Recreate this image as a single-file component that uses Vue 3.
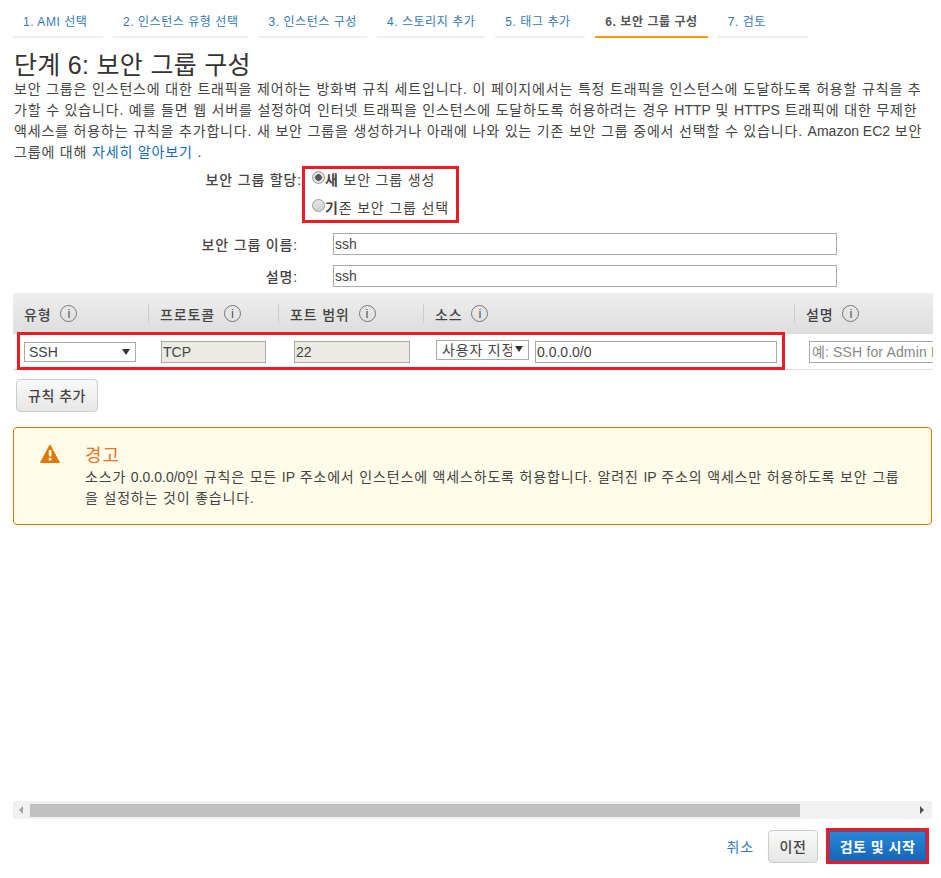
<script setup>
const tabs = [
  { label: '1. AMI 선택' },
  { label: '2. 인스턴스 유형 선택' },
  { label: '3. 인스턴스 구성' },
  { label: '4. 스토리지 추가' },
  { label: '5. 태그 추가' },
  { label: '6. 보안 그룹 구성', active: true },
  { label: '7. 검토' },
]
const columns = [
  { label: '유형', width: 135 },
  { label: '프로토콜', width: 130 },
  { label: '포트 범위', width: 145 },
  { label: '소스', width: 371 },
  { label: '설명', width: 138 },
]
</script>

<template>
  <div class="page">
    <ul class="tabs">
      <li v-for="tab in tabs" :key="tab.label" :class="{ tab: true, active: tab.active }">{{ tab.label }}</li>
    </ul>

    <h1 class="title">단계 6: 보안 그룹 구성</h1>
    <p class="intro">
      보안 그룹은 인스턴스에 대한 트래픽을 제어하는 방화벽 규칙 세트입니다. 이 페이지에서는 특정 트래픽을 인스턴스에 도달하도록 허용할 규칙을 추<br>
      가할 수 있습니다. 예를 들면 웹 서버를 설정하여 인터넷 트래픽을 인스턴스에 도달하도록 허용하려는 경우 <span class="en">HTTP</span> 및 <span class="en">HTTPS</span> 트래픽에 대한 무제한<br>
      액세스를 허용하는 규칙을 추가합니다. 새 보안 그룹을 생성하거나 아래에 나와 있는 기존 보안 그룹 중에서 선택할 수 있습니다. <span class="en">Amazon EC2</span> 보안<br>
      그룹에 대해 <a class="link">자세히 알아보기</a> .
    </p>

    <div class="assign">
      <div class="assign-label">보안 그룹 할당:</div>
      <div class="radios">
        <label class="radio"><input type="radio" name="sg" checked><span><b>새</b> 보안 그룹 생성</span></label>
        <label class="radio"><input type="radio" name="sg"><span><b>기</b>존 보안 그룹 선택</span></label>
        <div class="mark"></div>
      </div>
    </div>

    <div class="field first">
      <div class="field-label">보안 그룹 이름:</div>
      <input class="box field-input" value="ssh">
    </div>
    <div class="field">
      <div class="field-label">설명:</div>
      <input class="box field-input" value="ssh">
    </div>

    <div class="table">
      <div class="thead">
        <div v-for="col in columns" :key="col.label" class="th" :style="{ width: col.width + 'px' }">
          <span class="th-text">{{ col.label }}</span>
          <span class="info">i</span>
        </div>
      </div>
      <div class="tr">
        <div class="select-wrap type"><select class="select"><option>SSH</option></select></div>
        <input class="box ro proto" value="TCP" readonly>
        <input class="box ro port" value="22" readonly>
        <div class="select-wrap source"><select class="select"><option>사용자 지정</option></select></div>
        <input class="box cidr" value="0.0.0.0/0">
        <input class="box desc" placeholder="예: SSH for Admin Desktop">
      </div>
      <div class="mark row-mark"></div>
    </div>

    <button class="btn add">규칙 추가</button>

    <div class="warning">
      <svg class="warn-icon" width="20" height="19" viewBox="0 0 20 19">
        <path d="M10 1 L19.5 18.5 H0.5 Z" fill="#e07700" stroke="#e07700" stroke-width="1" stroke-linejoin="round"/>
        <rect x="8.8" y="6" width="2.6" height="6.5" fill="#fffce9"/>
        <rect x="8.8" y="14" width="2.6" height="2.6" fill="#fffce9"/>
      </svg>
      <div>
        <div class="warn-title">경고</div>
        <div class="warn-text">
          소스가 <span class="en">0.0.0.0/0</span>인 규칙은 모든 <span class="en">IP</span> 주소에서 인스턴스에 액세스하도록 허용합니다. 알려진 <span class="en">IP</span> 주소의 액세스만 허용하도록 보안 그룹<br>
          을 설정하는 것이 좋습니다.
        </div>
      </div>
    </div>

    <div class="spacer"></div>

    <div class="scrollbar">
      <span class="arrow left"></span>
      <div class="thumb"></div>
      <span class="arrow right"></span>
    </div>

    <div class="footer">
      <a class="cancel">취소</a>
      <button class="btn prev">이전</button>
      <div class="primary-wrap">
        <button class="primary">검토 및 시작</button>
      </div>
    </div>
  </div>
</template>

<style scoped>
.page {
  box-sizing: border-box;
  width: 941px;
  height: 878px;
  overflow: hidden;
  padding: 0 9px 0 13px;
  display: flex;
  flex-direction: column;
  font-family: "Liberation Sans", "Noto Sans CJK KR", sans-serif;
  font-size: 14px;
  letter-spacing: 0.83px;
  color: #444;
}
.en {
  letter-spacing: 0;
}
.tabs {
  list-style: none;
  display: flex;
  gap: 10px;
  margin: 0;
  padding: 0;
  height: 38px;
}
.tab {
  box-sizing: border-box;
  min-width: 90px;
  height: 38px;
  padding: 13px 10px 0;
  font-size: 12px;
  line-height: 18px;
  letter-spacing: 0.55px;
  color: #337ab7;
  border-bottom: 2px solid #eee;
}
.tab.active {
  color: #555;
  font-weight: bold;
  border-bottom-color: #f90;
}
.title {
  margin: 13px 0 -1px 1px;
  font-size: 25px;
  font-weight: normal;
  line-height: 29px;
  letter-spacing: 0.3px;
  color: #333;
}
.intro {
  margin: 0 0 0 1px;
  line-height: 21px;
  white-space: nowrap;
}
.link {
  color: #0f6cbd;
}
.assign {
  display: flex;
  margin-top: 3px;
}
.assign-label {
  width: 289px;
  padding-top: 4px;
  text-align: right;
  font-weight: 500;
  line-height: 20px;
  white-space: nowrap;
}
.radios {
  position: relative;
  box-sizing: border-box;
  width: 157px;
  height: 57px;
  margin-top: 0;
  padding: 3px 0 0 10px;
}
.radio {
  display: flex;
  height: 28px;
  line-height: 23px;
  white-space: nowrap;
}
.radio input {
  appearance: none;
  box-sizing: border-box;
  width: 13px;
  height: 13px;
  margin: 2px 0 0 0;
  flex: none;
  border: 1px solid #999;
  border-radius: 50%;
  background: linear-gradient(#e6e6e6, #cfcfcf);
}
.radio input:checked {
  background: radial-gradient(circle, #555 0 3px, #ddd 3.6px);
}
.mark {
  position: absolute;
  inset: 0;
  border: 3px solid #ed1c24;
  pointer-events: none;
}
.field {
  display: flex;
  align-items: center;
  margin-top: 10px;
}
.field.first {
  margin-top: 10px;
}
.field-label {
  width: 285px;
  text-align: right;
  font-weight: 500;
  color: #444;
}
.box {
  box-sizing: border-box;
  height: 22px;
  padding: 0 1px;
  border: 1px solid #aaa;
  border-radius: 0;
  outline: none;
  background: #fff;
  font: inherit;
  color: #444;
}
.field-input {
  width: 504px;
  margin-left: 35px;
}
.table {
  position: relative;
  margin-top: 6px;
  width: 920px;
  overflow: hidden;
}
.thead {
  display: flex;
  height: 41px;
  align-items: center;
  background: linear-gradient(#eeeeee, #dddddd);
}
.th {
  box-sizing: border-box;
  flex: none;
  display: flex;
  align-items: center;
  gap: 9px;
  height: 19px;
  padding-left: 11px;
  border-left: 1px solid #ccc;
}
.th:first-child {
  border-left: 0;
}
.th-text {
  font-weight: 500;
  color: #444;
  white-space: nowrap;
}
.info {
  box-sizing: border-box;
  width: 17px;
  height: 17px;
  border: 1px solid #777;
  border-radius: 50%;
  font-size: 13px;
  line-height: 15px;
  letter-spacing: 0;
  text-align: center;
  color: #555;
}
.tr {
  display: flex;
  align-items: center;
  height: 36px;
  border-bottom: 1px solid #ddd;
  box-sizing: border-box;
}
.select-wrap {
  position: relative;
  flex: none;
}
.select-wrap::after {
  content: "";
  position: absolute;
  right: 6px;
  top: 7px;
  border-left: 4px solid transparent;
  border-right: 4px solid transparent;
  border-top: 6px solid #333;
  pointer-events: none;
}
.select {
  appearance: none;
  box-sizing: border-box;
  display: block;
  width: 100%;
  height: 100%;
  padding: 0 14px 0 4px;
  border: 1px solid #aaa;
  border-radius: 0;
  background: #fff;
  font: inherit;
  color: #444;
}
.type {
  width: 112px;
  height: 20px;
  margin-left: 11px;
}
.ro {
  flex: none;
  background: #ebebe4;
}
.proto {
  width: 105px;
  margin-left: 25px;
}
.port {
  width: 116px;
  margin-left: 28px;
}
.source {
  width: 93px;
  height: 20px;
  margin: -3px 0 0 26px;
}
.source .select {
  padding: 0 16px 0 5px;
  letter-spacing: 0.83px;
}
.source::after {
  top: 6px;
}
.cidr {
  flex: none;
  width: 242px;
  margin-left: 6px;
}
.desc {
  flex: none;
  width: 170px;
  padding-left: 2px;
  margin-left: 32px;
  letter-spacing: 0.15px;
}
.desc::placeholder {
  color: #888;
}
.row-mark {
  inset: auto auto 0 4px;
  box-sizing: border-box;
  width: 768px;
  height: 38px;
}
.btn {
  box-sizing: border-box;
  border: 1px solid #ccc;
  border-radius: 4px;
  background: linear-gradient(#fafafa, #e6e6e6);
  font: inherit;
  font-weight: 500;
  letter-spacing: 0.5px;
  color: #444;
}
.add {
  align-self: flex-start;
  width: 82px;
  height: 33px;
  padding-bottom: 2px;
  margin: 9px 0 0 3px;
}
.warning {
  box-sizing: border-box;
  display: flex;
  gap: 25px;
  width: 919px;
  height: 98px;
  margin-top: 15px;
  padding: 16px 26px;
  background: #fffce9;
  border: 1px solid #e07b00;
  border-radius: 4px;
}
.warn-icon {
  flex: none;
  margin-top: 0;
}
.warn-title {
  margin-top: 2px;
  font-size: 18px;
  line-height: 21px;
  letter-spacing: 1px;
  color: #e5762a;
}
.warn-text {
  line-height: 21px;
  white-space: nowrap;
}
.spacer {
  flex: 1;
}
.scrollbar {
  display: flex;
  align-items: center;
  box-sizing: border-box;
  width: 919px;
  height: 18px;
  background: #f1f1f1;
}
.arrow {
  flex: none;
  border-top: 4px solid transparent;
  border-bottom: 4px solid transparent;
}
.arrow.left {
  margin-left: 6px;
  border-right: 4px solid #a3a3a3;
}
.arrow.right {
  margin-left: 120px;
  border-left: 4px solid #505050;
}
.thumb {
  flex: none;
  width: 770px;
  height: 13px;
  margin-left: 7px;
  background: #c1c1c1;
}
.footer {
  display: flex;
  align-items: center;
  justify-content: flex-end;
  height: 36px;
  margin: 9px 0 14px;
  padding-right: 3px;
}
.cancel {
  color: #337ab7;
  margin-right: 14px;
}
.prev {
  width: 50px;
  height: 33px;
  margin-right: 8px;
}
.primary-wrap {
  box-sizing: border-box;
  border: 3px solid #ed1c24;
}
.primary {
  display: block;
  box-sizing: border-box;
  width: 97px;
  height: 30px;
  border: 1px solid #1a66b0;
  background: linear-gradient(#2b87d8, #1666b8);
  font: inherit;
  font-weight: bold;
  letter-spacing: 0.5px;
  color: #fff;
}
</style>
